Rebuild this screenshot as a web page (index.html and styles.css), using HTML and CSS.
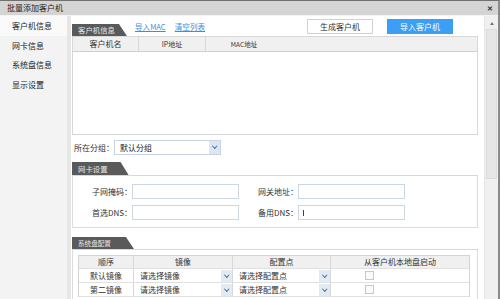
FILE: index.html
```html
<!DOCTYPE html>
<html>
<head>
<meta charset="utf-8">
<link rel="stylesheet" href="styles.css">
</head>
<body>
<div class="window">
  <div class="titlebar">
    <span class="title">批量添加客户机</span>
    <span class="close">✕</span>
  </div>
  <div class="body">
    <div class="sidebar">
      <div class="nav active">客户机信息</div>
      <div class="nav">网卡信息</div>
      <div class="nav">系统盘信息</div>
      <div class="nav">显示设置</div>
    </div>
    <div class="divider"></div>
    <div class="main">
      <div class="toprow">
        <div class="tab t1">客户机信息</div>
        <a class="link">导入MAC</a>
        <a class="link">清空列表</a>
        <div class="spacer"></div>
        <div class="btn">生成客户机</div>
        <div class="btn primary">导入客户机</div>
      </div>
      <div class="clientlist">
        <div class="lhead">
          <div class="lc c1">客户机名</div>
          <div class="lc c2">IP地址</div>
          <div class="lc c3">MAC地址</div>
        </div>
        <div class="lbody"></div>
      </div>
      <div class="grouprow">
        <span class="lbl">所在分组：</span>
        <div class="select gsel"><span>默认分组</span><i class="arrow"></i></div>
      </div>
      <div class="section s1">
        <div class="sechead"><div class="tab t2">网卡设置</div></div>
        <div class="secbox netbox">
          <div class="frow">
            <span class="flabel">子网掩码：</span><div class="input"></div>
            <span class="flabel l2">网关地址：</span><div class="input"></div>
          </div>
          <div class="frow">
            <span class="flabel">首选DNS：</span><div class="input"></div>
            <span class="flabel l2">备用DNS：</span><div class="input"><span class="caret"></span></div>
          </div>
        </div>
      </div>
      <div class="section s2">
        <div class="sechead"><div class="tab t3">系统盘配置</div></div>
        <div class="secbox diskbox">
          <div class="dtable">
            <div class="drow dhead">
              <div class="dc k1">顺序</div>
              <div class="dc k2">镜像</div>
              <div class="dc k3">配置点</div>
              <div class="dc k4">从客户机本地盘启动</div>
            </div>
            <div class="drow">
              <div class="dc k1">默认镜像</div>
              <div class="dc k2 sel"><span>请选择镜像</span><i class="arrow"></i></div>
              <div class="dc k3 sel"><span>请选择配置点</span><i class="arrow"></i></div>
              <div class="dc k4 cbcell"><span class="cb"></span></div>
            </div>
            <div class="drow">
              <div class="dc k1">第二镜像</div>
              <div class="dc k2 sel"><span>请选择镜像</span><i class="arrow"></i></div>
              <div class="dc k3 sel"><span>请选择配置点</span><i class="arrow"></i></div>
              <div class="dc k4 cbcell"><span class="cb"></span></div>
            </div>
          </div>
        </div>
      </div>
    </div>
    <div class="scrollbar">
      <div class="sb-up"></div>
      <div class="sb-thumb"></div>
    </div>
  </div>
</div>
</body>
</html>
```

FILE: styles.css
```css
* { box-sizing: border-box; }
html, body { margin: 0; padding: 0; }
body {
  width: 500px; height: 299px; overflow: hidden;
  font-family: "Noto Sans CJK SC", "Noto Sans", sans-serif;
  font-size: 8px; color: #333; background: #fff;
}
.window {
  width: 500px; height: 299px; overflow: hidden;
  border-top: 1px solid #707070;
  border-right: 2px solid #8a8a8a;
  display: flex; flex-direction: column;
}
.titlebar {
  height: 15px; flex: none;
  background: #d4d4d4;
  border-bottom: 1px solid #f4f4f4;
  display: flex; align-items: center; justify-content: space-between;
  padding: 0 5px 0 7px;
}
.title { font-size: 8px; color: #222; line-height: 12px; }
.close { font-size: 7px; font-weight: bold; color: #333; }
.body { flex: 1; display: flex; min-height: 0; }
.sidebar {
  width: 67px; flex: none; background: #f3f3f3;
}
.nav {
  height: 19.6px; line-height: 19.6px; padding-left: 12px;
  font-size: 8px; color: #222;
}
.nav.active { background: #fafafa; }
.divider { width: 4px; flex: none; background: #e6e6e6; }
.main {
  width: 407px; flex: none; padding-left: 1px;
  display: flex; flex-direction: column;
}
.main > * { flex: none; }
.toprow {
  height: 17px; margin-top: 3px;
  display: flex; align-items: flex-end;
}
.tab {
  height: 12px; line-height: 12px; color: #e8e8e8;
  font-size: 7.4px; background: #5a5a5a;
  padding: 0 12px 0 6px;
  clip-path: polygon(0 0, calc(100% - 8px) 0, 100% 100%, 0 100%);
  flex: none;
}
.t1 { margin-right: 8px; }
.t2 { height: 13px; line-height: 13px; padding-right: 21px; }
.t3 { padding-right: 23px; font-size: 6.6px; }
.link {
  color: #3a8fe0; text-decoration: underline; font-size: 7.6px;
  margin-right: 9px; align-self: flex-start; margin-top: 2px; line-height: 11px;
}
.spacer { flex: 1; }
.btn {
  align-self: flex-start;
  width: 66px; height: 15px; line-height: 13px; text-align: center;
  border: 1px solid #d0d0d0; background: #fff; font-size: 8px; color: #333;
  margin-right: 14px;
}
.btn.primary { background: #3d9ef5; border-color: #3d9ef5; color: #fff; margin-right: 25px; }
.clientlist { width: 406px; }
.lhead {
  height: 16px; display: flex; background: #f0f0f0;
  border: 1px solid #d8d8d8; border-bottom-color: #d0d0d0;
}
.lc { text-align: center; line-height: 14px; font-size: 8px; color: #333; border-right: 1px solid #d8d8d8; }
.c1 { width: 66px; }
.c2 { width: 67px; font-size: 7px; }
.c3 { width: 76px; font-size: 6.5px; border-right: none; }
.lbody { height: 83px; border: 1px solid #d8d8d8; border-top: none; background: #fff; }
.grouprow { height: 24px; display: flex; align-items: center; padding-left: 2px; }
.lbl { font-size: 8px; color: #333; width: 40px; white-space: nowrap; flex: none; }
.select {
  height: 15px; border: 1px solid #c9d4e2; display: flex; align-items: center;
  justify-content: space-between; font-size: 8px; color: #222; padding-left: 5px;
}
.gsel { width: 107px; }
.arrow {
  width: 11px; height: 13px; background: #dde6f2; position: relative; flex: none;
}
.arrow::after {
  content: ""; position: absolute; left: 4px; top: 3.5px;
  width: 2.5px; height: 2.5px; border-right: 1.2px solid #4a6fa0; border-bottom: 1.2px solid #4a6fa0;
  transform: rotate(45deg);
}
.section { width: 406px; }
.s1 { margin-top: 3px; }
.s2 { margin-top: 9px; }
.sechead { height: 14px; border-bottom: 1px solid #d8d8d8; display: flex; align-items: flex-end; }
.s2 .sechead { height: 13px; }
.secbox { border: 1px solid #dcdcdc; border-top: none; }
.netbox { height: 52px; padding-top: 5px; }
.frow { display: flex; align-items: center; height: 21px; }
.flabel { width: 59px; text-align: right; font-size: 8px; color: #333; white-space: nowrap; }
.flabel.l2 { width: 59px; }
.input { width: 107px; height: 15px; border: 1px solid #cdd7e3; background: #fff; position: relative; }
.caret { position: absolute; left: 4px; top: 4px; width: 1px; height: 6px; background: #444; }
.diskbox { height: 60px; padding: 5px 7px 0 5px; border-bottom: none; }
.dtable { border: 1px solid #d4d4d4; border-bottom: none; }
.drow { display: flex; height: 14px; border-bottom: 1px solid #e0e0e0; }
.dhead { background: #f0f0f0; height: 13px; }
.dc { border-right: 1px solid #d8d8d8; font-size: 8px; line-height: 12px; color: #333; display: flex; align-items: center; justify-content: center; white-space: nowrap; }
.k1 { width: 55px; }
.k2 { width: 99px; }
.k3 { width: 98px; }
.k4 { flex: 1; border-right: none; }
.dc.sel { justify-content: space-between; padding-left: 6px; }
.dc.sel .arrow { height: 12px; background: #e2eaf4; }
.cbcell { justify-content: flex-start; padding-left: 34px; }
.cb { width: 9px; height: 9px; border: 1px solid #c8c8c8; background: #fafafa; }
.scrollbar {
  width: 14px; flex: none; margin-left: 6px; background: #f0f0f0;
  border-left: 1px solid #e4e4e4; padding: 3px 1px 0;
  display: flex; flex-direction: column; align-items: center;
}
.sb-up { width: 0; height: 0; border-left: 2.5px solid transparent; border-right: 2.5px solid transparent; border-bottom: 3px solid #777; margin: 3px 0 4px; }
.sb-thumb { width: 11px; height: 150px; background: #e6e6e6; border: 1px solid #dcdcdc; }
```
